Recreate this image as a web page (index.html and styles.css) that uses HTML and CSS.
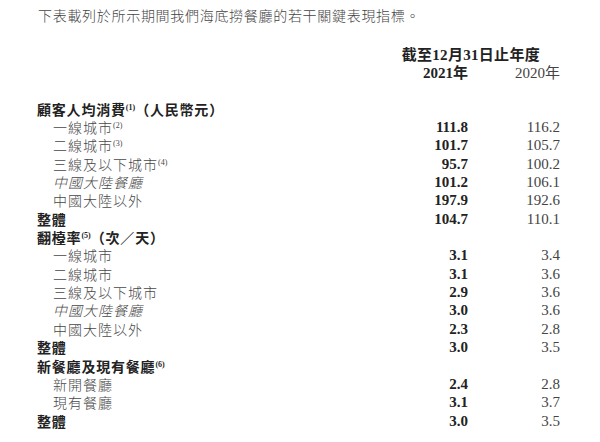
FILE: index.html
```html
<!DOCTYPE html>
<html lang="zh-Hant">
<head>
<meta charset="utf-8">
<title>關鍵表現指標</title>
<link rel="stylesheet" href="styles.css">
</head>
<body>
<div class="page">
  <p class="intro">下表載列於所示期間我們海底撈餐廳的若干關鍵表現指標。</p>

  <div class="grid thead">
    <div class="head1">截至12月31日止年度</div>
    <div class="label"></div>
    <div class="num b">2021年</div>
    <div class="num">2020年</div>
  </div>

  <div class="grid tbody">
    <div class="label b">顧客人均消費<sup>(1)</sup>（人民幣元）</div><div class="num"></div><div class="num"></div>
    <div class="label sub">一線城市<sup>(2)</sup></div><div class="num b">111.8</div><div class="num">116.2</div>
    <div class="label sub">二線城市<sup>(3)</sup></div><div class="num b">101.7</div><div class="num">105.7</div>
    <div class="label sub">三線及以下城市<sup>(4)</sup></div><div class="num b">95.7</div><div class="num">100.2</div>
    <div class="label sub it">中國大陸餐廳</div><div class="num b">101.2</div><div class="num">106.1</div>
    <div class="label sub">中國大陸以外</div><div class="num b">197.9</div><div class="num">192.6</div>
    <div class="label b">整體</div><div class="num b">104.7</div><div class="num">110.1</div>

    <div class="label b">翻檯率<sup>(5)</sup>（次／天）</div><div class="num"></div><div class="num"></div>
    <div class="label sub">一線城市</div><div class="num b">3.1</div><div class="num">3.4</div>
    <div class="label sub">二線城市</div><div class="num b">3.1</div><div class="num">3.6</div>
    <div class="label sub">三線及以下城市</div><div class="num b">2.9</div><div class="num">3.6</div>
    <div class="label sub it">中國大陸餐廳</div><div class="num b">3.0</div><div class="num">3.6</div>
    <div class="label sub">中國大陸以外</div><div class="num b">2.3</div><div class="num">2.8</div>
    <div class="label b">整體</div><div class="num b">3.0</div><div class="num">3.5</div>

    <div class="label b">新餐廳及現有餐廳<sup>(6)</sup></div><div class="num"></div><div class="num"></div>
    <div class="label sub">新開餐廳</div><div class="num b">2.4</div><div class="num">2.8</div>
    <div class="label sub">現有餐廳</div><div class="num b">3.1</div><div class="num">3.7</div>
    <div class="label b">整體</div><div class="num b">3.0</div><div class="num">3.5</div>
  </div>
</div>
</body>
</html>
```

FILE: styles.css
```css
html, body {
  margin: 0;
  padding: 0;
  background: #ffffff;
}

.page {
  width: 600px;
  height: 442px;
  overflow: hidden;
  font-family: "Liberation Serif", "Noto Sans CJK TC", serif;
  color: #3c3c3c;
}

.intro {
  margin: 0;
  padding: 5px 0 0 38px;
  height: 20px;
  line-height: 20px;
  font-family: "Noto Sans CJK TC", sans-serif;
  font-weight: 300;
  font-size: 14px;
  letter-spacing: 0.7px;
  color: #444;
}

.grid {
  display: grid;
  grid-template-columns: 1fr 60px 92px;
  grid-auto-rows: 18.35px;
  padding: 0 40px 0 37px;
  line-height: 18.35px;
  font-size: 15px;
}

.thead {
  margin-top: 21px;
}

.tbody {
  margin-top: 17px;
}

.head1 {
  grid-column: 1 / span 3;
  text-align: right;
  padding-right: 20px;
  font-weight: 700;
  color: #222;
  letter-spacing: 0.3px;
}

.label {
  font-family: "Noto Sans CJK TC", sans-serif;
  font-size: 14px;
  font-weight: 300;
  letter-spacing: 1px;
  white-space: nowrap;
  color: #484848;
}

.label.b {
  font-weight: 700;
  color: #222;
  letter-spacing: 0.8px;
}

.label.sub {
  padding-left: 16px;
}

.label.it {
  font-style: italic;
}

.num {
  text-align: right;
  white-space: nowrap;
  color: #444;
}

.num.b {
  font-weight: 700;
  color: #222;
}

sup {
  font-family: "Liberation Serif", serif;
  font-size: 8px;
  line-height: 0;
  vertical-align: 5px;
  letter-spacing: 0;
  font-weight: 400;
}

.label.b sup {
  font-weight: 700;
}
```
